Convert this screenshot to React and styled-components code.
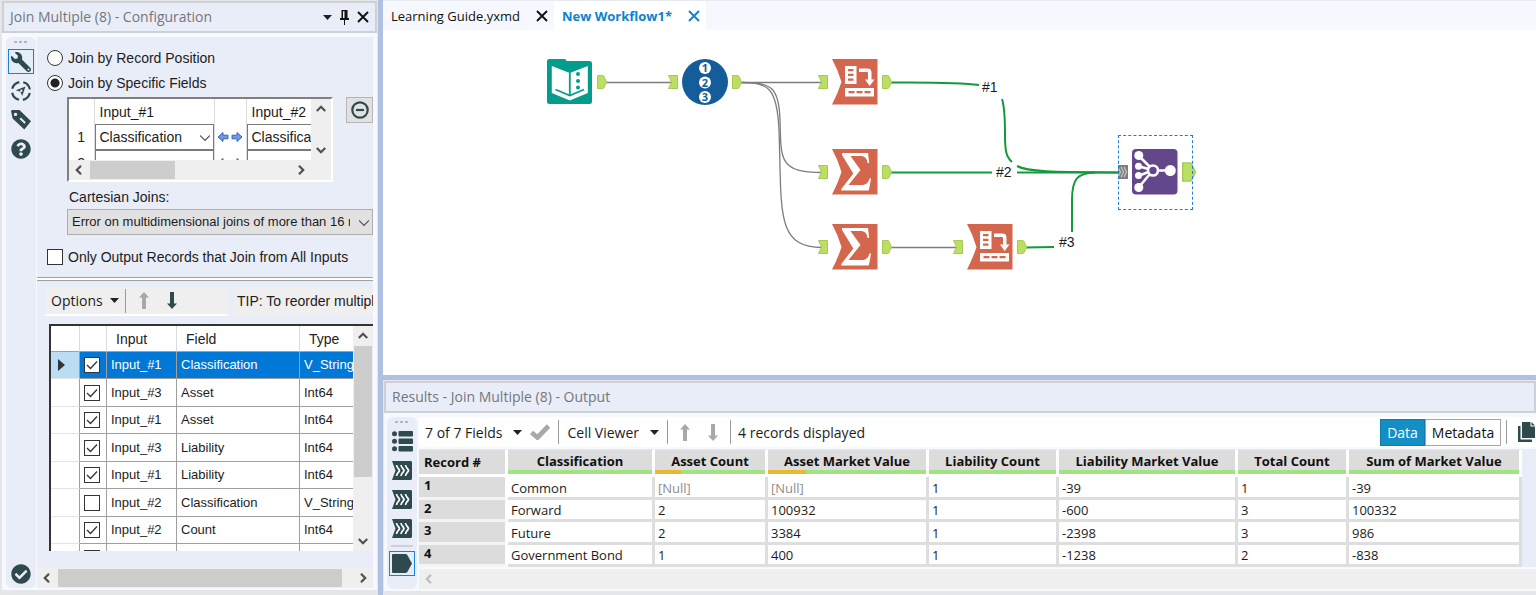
import React from "react";
import styled, { createGlobalStyle, css } from "styled-components";
import { FaWrench, FaQuestionCircle, FaCheckCircle } from "react-icons/fa";

const slate = "#2f4a4c";
const panel = "#e9edf8";
const uiFont = `"Open Sans", "Noto Sans", sans-serif`;
const formFont = `"Liberation Sans", Arial, sans-serif`;

const GlobalStyle = createGlobalStyle`
  * {
    box-sizing: border-box;
  }
  body {
    margin: 0;
    background: #e5e6e9;
    font-family: ${uiFont};
    font-size: 13px;
    color: #1c1c1c;
  }
  button, select, input {
    margin: 0;
    font: inherit;
    color: inherit;
  }
  button {
    display: flex;
    align-items: center;
    justify-content: center;
    padding: 0;
    border: none;
    background: none;
  }
  svg {
    display: block;
    flex: none;
  }
`;

const Page = styled.div`
  display: flex;
  height: 100vh;
  overflow: hidden;
`;

/* shared panel parts */

const TitleBar = styled.header`
  display: flex;
  align-items: center;
  gap: 8px;
  flex: none;
  height: 32px;
  padding: 0 6px;
  border: 2px solid #cfd0d4;
  background: ${panel};
  color: #111;

  h2 {
    flex: 1;
    margin: 0;
    font-size: 14px;
    font-weight: 400;
    line-height: 20px;
    color: #74767d;
    white-space: nowrap;
  }
`;

const PanelBody = styled.div`
  display: flex;
  flex: 1;
  min-height: 0;
  padding: 4px 4px 2px 3px;
  background: #f6f9ff;
`;

const Rail = styled.nav`
  display: flex;
  flex-direction: column;
  align-items: center;
  flex: none;
  width: 30px;
  gap: 4px;
  padding-top: 4px;
  border-radius: 6px;
  background: ${panel};
  color: ${slate};
`;

const Dots = styled.div`
  width: 14px;
  height: 2px;
  margin-bottom: 2px;
  background: repeating-linear-gradient(90deg, #b4b6bc 0 3px, transparent 3px 5px);
`;

const RailButton = styled.button`
  width: 26px;
  height: 25px;
  ${(p) =>
    p.$active &&
    css`
      border: 1px solid #1a80d8;
      background: #e3eefb;
    `}
  ${(p) =>
    p.$last &&
    css`
      margin-top: auto;
      margin-bottom: 2px;
    `}
`;

const RailLine = styled.div`
  width: 22px;
  height: 2px;
  background: #cdd0d6;
`;

/* configuration panel */

const ConfigPanel = styled.aside`
  display: flex;
  flex-direction: column;
  flex: 0 0 378px;
  min-width: 0;
  padding: 1px 1px 5px 2px;

  ${PanelBody} {
    padding-left: 4px;
  }
`;

const ConfigColumn = styled.div`
  display: flex;
  flex-direction: column;
  flex: 1;
  min-width: 0;
  margin-left: 1px;
  background: ${panel};
`;

const Form = styled.div`
  display: flex;
  flex-direction: column;
  flex: 1;
  min-height: 0;
  overflow: hidden;
  padding-top: 8px;
  font-family: ${formFont};
  font-size: 14px;
  line-height: 16px;
`;

const Choice = styled.label`
  display: flex;
  align-items: center;
  gap: 5px;
  height: 25px;
  padding-left: 10px;
  white-space: nowrap;
`;

const Radio = styled.input.attrs({ type: "radio" })`
  appearance: none;
  width: 16px;
  height: 16px;
  border: 1px solid #333;
  border-radius: 50%;
  background: #fff;

  &:checked {
    background: radial-gradient(circle, #222 4px, #fff 5px);
  }
`;

const Check = styled.input.attrs({ type: "checkbox" })`
  appearance: none;
  display: block;
  width: 16px;
  height: 16px;
  border: 1px solid #333;
  background: #fff;

  &:checked {
    background: #fff
      url("data:image/svg+xml,%3Csvg xmlns='http://www.w3.org/2000/svg' viewBox='0 0 14 14'%3E%3Cpath d='M2 7l3.5 3.5L12 3.5' fill='none' stroke='%23333' stroke-width='1.3'/%3E%3C/svg%3E");
  }
`;

const JoinRow = styled.div`
  display: flex;
  align-items: flex-start;
  justify-content: space-between;
  margin-left: 30px;
  padding-top: 2px;
`;

const JoinBox = styled.div`
  display: grid;
  grid-template-columns: 1fr 20px;
  grid-template-rows: 61px 20px;
  width: 266px;
  border: 2px solid;
  border-color: #808080 #fff #fff #808080;
  background: #efefef;
`;

const Clip = styled.div`
  min-width: 0;
  min-height: 0;
  overflow: hidden;
  background: #fff;
`;

const JoinTable = styled.table`
  width: 360px;
  table-layout: fixed;
  border-collapse: collapse;

  th {
    height: 25px;
    padding: 0 5px;
    border-right: 1px solid #dcdcdc;
    font-weight: 400;
    text-align: left;
  }
  td {
    height: 26px;
    padding: 0;
    border-right: 1px solid #dcdcdc;
  }
  td:first-child {
    text-align: center;
  }
`;

const SelectWrap = styled.div`
  position: relative;

  svg {
    position: absolute;
    top: 50%;
    right: 4px;
    margin-top: -4px;
    pointer-events: none;
  }
`;

const Select = styled.select`
  appearance: none;
  display: block;
  width: 100%;
  height: 26px;
  padding: 0 ${(p) => (p.$grey ? 22 : 20)}px 0 4px;
  border: 1px solid ${(p) => (p.$grey ? "#adadad" : "#7a7a7a")};
  border-radius: 0;
  background: ${(p) => (p.$grey ? "#e1e1e1" : "#fff")};
  font-size: ${(p) => (p.$grey ? 13 : 14)}px;
`;

const Arrows = styled.div`
  display: flex;
  justify-content: center;
  gap: 2px;
`;

const IconButton = styled.button`
  width: 27px;
  height: 26px;
  border: 1px solid #b5b5b5;
  background: #e1e1e1;
  color: ${slate};
`;

const Cartesian = styled.div`
  display: flex;
  flex-direction: column;
  gap: 4px;
  margin: 7px 0 9px 30px;

  label {
    padding-left: 2px;
  }
`;

const Splitter = styled.div`
  flex: none;
  height: 4px;
  margin: 8px 0 6px;
  border-top: 1px solid #a0a0a0;
  border-bottom: 1px solid #a0a0a0;
  background: #fff;
`;

const OptionsRow = styled.div`
  display: flex;
  flex: none;
  gap: 5px;
  padding-left: 8px;
  white-space: nowrap;
`;

const Strip = styled.div`
  display: flex;
  align-items: center;
  gap: 6px;
  height: 29px;
  width: ${(p) => (p.$fill ? "auto" : "183px")};
  flex: ${(p) => (p.$fill ? "1" : "none")};
  overflow: hidden;
  padding: 0 0 0 ${(p) => (p.$fill ? 4 : 6)}px;
  border-bottom: 2px solid ${(p) => (p.$fill ? "#efefef" : "#fff")};
  background: #efefef;
`;

const TextButton = styled.button`
  gap: ${(p) => (p.$tight ? 7 : 11)}px;
  font-family: ${uiFont};
  font-size: 14px;
  white-space: nowrap;
`;

const Rule = styled.span`
  width: 1px;
  height: 24px;
  background: #9a9a9a;
`;

const ToolGroup = styled.div`
  display: flex;
  align-items: center;
  gap: ${(p) => p.$gap}px;
  margin-left: ${(p) => (p.$end ? "auto" : `${p.$before || 0}px`)};
`;

const FieldsBox = styled.div`
  display: grid;
  grid-template-columns: 1fr 20px;
  flex: none;
  height: 227px;
  margin: 8px 0 0 12px;
  border-top: 2px solid #333;
  border-left: 2px solid #333;
  background: #efefef;
`;

const FieldsTable = styled.table`
  width: 310px;
  table-layout: fixed;
  border-collapse: separate;
  border-spacing: 0;
  font-size: 13px;

  th {
    height: 26px;
    padding: 0 9px;
    border-right: 1px solid #dcdcdc;
    border-bottom: 1px solid #a0a0a0;
    font-size: 14px;
    font-weight: 400;
    text-align: left;
    color: #222;
  }
  td {
    height: 27px;
    padding: 0 4px;
    border-right: 1px solid #a0a0a0;
    border-bottom: 1px solid #a0a0a0;
    white-space: nowrap;
  }
  tr:nth-child(even) td {
    height: 28px;
  }
  td:first-child {
    padding: 0 7px;
    border-bottom-color: #e4e4e4;
  }
`;

const FieldRow = styled.tr`
  ${(p) =>
    p.$selected &&
    css`
      background: #0078d7;
      color: #fff;

      td:first-child {
        background: #bcdcf4;
      }
    `}
`;

/* scrollbars */

const VBar = styled.div`
  display: flex;
  flex-direction: column;
  align-items: center;
  background: #efefef;
  color: #505050;
`;

const HBar = styled.div`
  display: flex;
  align-items: center;
  flex: none;
  height: 20px;
  background: #efefef;
  color: ${(p) => (p.$idle ? "#bdbdbd" : "#505050")};
`;

const ScrollButton = styled.button`
  flex: none;
  width: 20px;
  height: 20px;
`;

const Track = styled.div`
  display: flex;
  flex-direction: ${(p) => (p.$vertical ? "column" : "row")};
  align-self: stretch;
  flex: 1;
  min-height: 0;
`;

const Thumb = styled.div`
  flex: 0 0 ${(p) => p.$size};
  margin: ${(p) => (p.$vertical ? "0 1px" : "1px")};
  background: #cdcdcd;
`;

/* workspace */

const Workspace = styled.main`
  display: flex;
  flex-direction: column;
  flex: 1;
  min-width: 0;
  border-left: 5px solid #b0c0e2;
`;

const Tabs = styled.div`
  display: flex;
  flex: none;
  height: 30px;
  border-top: 1px solid #e8ecf2;
  background: #f5f9ff;
`;

const Tab = styled.div`
  display: flex;
  align-items: center;
  gap: 16px;
  padding: 0 6px 0 8px;
  background: ${(p) => (p.$active ? "#fff" : "transparent")};
  color: ${(p) => (p.$active ? "#0c82cf" : "#111")};
  font-weight: ${(p) => (p.$active ? 700 : 400)};
  white-space: nowrap;
`;

const Canvas = styled.section`
  position: relative;
  flex: 1;
  min-height: 0;
  overflow: hidden;
  background: #fff;
`;

const Wires = styled.svg`
  position: absolute;
  left: 0;
  top: 0;
`;

const Node = styled.div`
  position: absolute;
  left: ${(p) => p.$x}px;
  top: ${(p) => p.$y}px;
  display: flex;
  align-items: center;
  gap: 4px;
  width: 75px;
  height: 75px;
  padding-bottom: 1px;
  ${(p) => p.$selected && "outline: 1px dashed #1a80d8; outline-offset: -1px;"}
`;

const Slot = styled.span`
  flex: none;
  width: 10px;
`;

const WireLabel = styled.span`
  position: absolute;
  left: ${(p) => p.$x}px;
  top: ${(p) => p.$y}px;
  font-family: ${formFont};
  font-size: 14px;
  line-height: 16px;
`;

/* results */

const Results = styled.section`
  display: flex;
  flex-direction: column;
  flex: none;
  height: 220px;
  padding: 1px 0 4px 1px;
  border-top: 5px solid #b0c0e2;
`;

const ResultsColumn = styled.div`
  display: flex;
  flex-direction: column;
  flex: 1;
  min-width: 0;
  margin: 0 -4px 0 2px;
`;

const Toolbar = styled.div`
  display: flex;
  align-items: center;
  flex: none;
  height: 30px;
  padding-left: 6px;
  background: #fff;
  font-size: 14px;
  white-space: nowrap;
`;

const Switch = styled.button`
  width: ${(p) => (p.$on ? 45 : 76)}px;
  height: 27px;
  border: 1px solid ${(p) => (p.$on ? "#127aa8" : "#a5a5a5")};
  background: ${(p) => (p.$on ? "#148fc6" : "#fff")};
  color: ${(p) => (p.$on ? "#fff" : "#111")};
`;

const TableArea = styled.div`
  margin: 2px 0;
  background: ${panel};
`;

const DataTable = styled.table`
  width: 1103px;
  table-layout: fixed;
  border-collapse: separate;
  border-spacing: 0;
  line-height: 17px;
  background: #fff;

  th {
    padding: 0;
    border-right: 3px solid #fff;
    background: #dcdcdc;
    font-weight: 700;
    color: #111;
  }
  thead th {
    height: 28px;
    border-top: 1px solid #e6e6e6;
    border-bottom: 3px solid #fff;
  }
  thead th:first-child,
  tbody th {
    padding-left: 5px;
    text-align: left;
  }
  tbody th {
    border-bottom: 3px solid #f4f4f4;
    vertical-align: top;
  }
  td {
    padding: 2px 0 0 3px;
    border-right: 3px solid #dedede;
    border-bottom: 3px solid #dedede;
  }
  tbody tr {
    height: 22px;
  }
  tbody tr:nth-child(odd) {
    height: 23px;
  }
`;

const Quality = styled.div`
  height: 4px;
  background: linear-gradient(90deg, #e8b92f ${(p) => p.$nulls}%, #a0e481 ${(p) => p.$nulls}%);
`;

const HeadText = styled.div`
  height: 20px;
  line-height: 22px;
`;

const Null = styled.span`
  color: #8d8d8d;
`;

const Caret = () => (
  <svg width="9" height="5" viewBox="0 0 9 5">
    <path d="M0 0h9L4.500 5z" fill="#222" />
  </svg>
);

const Close = () => (
  <svg width="12" height="12" viewBox="0 0 12 12">
    <path d="M1 1l10 10M11 1l-10 10" stroke="currentColor" strokeWidth="1.900" />
  </svg>
);

const Pin = () => (
  <svg width="9" height="15" viewBox="0 0 9 15">
    <path d="M1.500 0h6v8H9v2H5v5H4v-5H0V8h1.500zM3 1.200V8h1.500V1.200z" fill="#111" fillRule="evenodd" />
  </svg>
);

const turns = { right: 0, down: 90, left: 180, up: 270 };

const Chevron = ({ to = "down", thin }) => (
  <svg width="10" height="10" viewBox="0 0 10 10">
    <path
      d={thin ? "M2.500 0l5 5-5 5" : "M3 .8l4.200 4.200L3 9.200"}
      fill="none"
      stroke={thin ? "#555" : "currentColor"}
      strokeWidth={thin ? 1.2 : 2.2}
      transform={`rotate(${turns[to]} 5 5)`}
    />
  </svg>
);

const VerticalArrow = ({ down, color = "#a8a8a8" }) => (
  <svg width="10" height="17" viewBox="0 0 10 17">
    <path d="M5 0l5 5.500H7V17H3V5.500H0z" fill={color} transform={down ? "rotate(180 5 8.500)" : undefined} />
  </svg>
);

const BlueArrow = ({ right }) => (
  <svg width="12" height="12" viewBox="0 0 12 12">
    <path
      d="M1 6L6 1.500v2.700h5v3.600H6v2.700z"
      fill="#6f99e0"
      stroke="#3566bd"
      transform={right ? "rotate(180 6 6)" : undefined}
    />
  </svg>
);

const CompassIcon = () => (
  <svg width="22" height="22" viewBox="0 0 22 22">
    <circle cx="11" cy="11" r="9" fill="none" stroke={slate} strokeWidth="2.200" strokeDasharray="10.140 4" strokeDashoffset="-2" />
    <path d="M15.500 6.500l-3.300 9.500-1.700-4.300-4.700-1.500z" fill={slate} />
    <circle cx="11.300" cy="10.700" r="1.200" fill={panel} />
  </svg>
);

const TagIcon = () => (
  <svg width="22" height="22" viewBox="0 0 22 22">
    <path
      d="M2 1h7.500L21 12.300 14.300 20.500 2.600 9.500 1 2zM5.500 3.700a1.700 1.700 0 1 0 .01 0zM9.500 10l5 4.700 1.300-1.500-4.900-4.700z"
      fill={slate}
      fillRule="evenodd"
    />
  </svg>
);

const MinusIcon = () => (
  <svg width="18" height="18" viewBox="0 0 18 18" fill="none" stroke={slate} strokeWidth="2.200">
    <circle cx="9" cy="9" r="7.700" />
    <path d="M5 9h8" />
  </svg>
);

const ListIcon = () => (
  <svg width="21" height="21" viewBox="0 0 21 21" fill={slate}>
    {[0, 7.5, 15].map((y) => (
      <g key={y}>
        <circle cx="2.500" cy={y + 2.75} r="2.500" />
        <rect x="6.500" y={y} width="14.500" height="5.500" rx="1" />
      </g>
    ))}
  </svg>
);

const InputIcon = () => (
  <svg width="20" height="19" viewBox="0 0 20 19">
    <path d="M0 0h19l1 1v17l-1 1H0l3.500-9.500z" fill={slate} />
    <path
      d="M4.500 4c.5 3.500 2.500 3 3 5.500-.5 2.500-2.500 2-3 5.500M9 4c.5 3.500 2.500 3 3 5.500-.5 2.500-2.500 2-3 5.500M13.500 4c.5 3.500 2.500 3 3 5.500-.5 2.500-2.500 2-3 5.500"
      fill="none"
      stroke="#fff"
      strokeWidth="1.700"
    />
  </svg>
);

const OutputIcon = () => (
  <svg width="20" height="19" viewBox="0 0 20 19">
    <path d="M1 0h12.500q1 0 1.700.8L20 9.500l-4.800 8.700q-.7.8-1.700.8H1q-1 0-1-1V1q0-1 1-1z" fill={slate} />
  </svg>
);

const TickIcon = () => (
  <svg width="20" height="16" viewBox="0 0 20 16">
    <path d="M1.500 8.500l6 5L18.500 2" fill="none" stroke="#a8a8a8" strokeWidth="4.800" />
  </svg>
);

const CopyIcon = () => (
  <svg width="18" height="20" viewBox="0 0 18 20" fill={slate}>
    <path d="M4 0h8.500v4.500H17V16H4zM13.500 0L17 3.500h-3.500z" />
    <path d="M0 4h2.500v13.500H14V20H0z" />
  </svg>
);

/* tool anchors and tiles */

const AnchorIn = () => (
  <svg width="10" height="14" viewBox="0 0 10 14">
    <path d="M.5.500h9v13h-9l3-6.500z" fill="#bbdf63" stroke="#a6c957" />
  </svg>
);

const AnchorMulti = () => (
  <svg width="10" height="14" viewBox="0 0 10 14">
    <path d="M0 0h10v14H0z" fill="#7f7f7f" />
    <path d="M0 2l2.500 5L0 12M3 2l2.500 5L3 12M6 2l2.500 5L6 12" fill="none" stroke="#e8e8e8" strokeWidth=".9" />
  </svg>
);

const AnchorOut = ({ big }) => (
  <svg width={big ? 14 : 10} height={big ? 20 : 14} viewBox="0 0 10 14">
    <path d="M.5.500h5.300q.6 0 1 .6L9.500 7l-2.700 5.900q-.4.600-1 .600H.5z" fill="#bbdf63" stroke="#a6c957" />
  </svg>
);

const InputTool = () => (
  <svg width="46" height="46" viewBox="0 0 46 46">
    <path d="M2.500 0h15q1.500 0 2 2h23q2.500 0 2.500 2.500v38q0 2.500-2.500 2.500h-40Q0 45 0 42.500v-40Q0 0 2.500 0z" fill="#049d8c" />
    <path d="M4.800 7l18 7 18-7v27l-18 7.500-18-7.500z" fill="#fff" />
    <path d="M22.800 13.500v23M8.500 30.500l14.300 6 14.300-6" fill="none" stroke="#049d8c" strokeWidth="1.800" />
    <g fill="#049d8c">
      <circle cx="31" cy="15" r="2" />
      <circle cx="31" cy="22" r="2" />
      <circle cx="31" cy="28.500" r="2" />
    </g>
  </svg>
);

const RecordIdTool = () => (
  <svg width="46" height="46" viewBox="0 0 46 46">
    <circle cx="23" cy="23" r="23" fill="#155d9a" />
    {["1", "2", "3"].map((n, i) => (
      <g key={n}>
        <circle cx="23" cy={9 + i * 14.5} r="6" fill="#fff" />
        <text x="23" y={13 + i * 14.5} textAnchor="middle" fontSize="11" fontWeight="700" fill="#155d9a">
          {n}
        </text>
      </g>
    ))}
  </svg>
);

const TransformShape = ({ children }) => (
  <svg width="46" height="46" viewBox="0 0 46 46">
    <path d="M0 0h45.500v45.500H0Q6 34 9.500 23 6 11 0 0z" fill="#d3664c" />
    {children}
  </svg>
);

const SummarizeTool = () => (
  <TransformShape>
    <path
      d="M10 4h26l1.200 10h-1.600c-1-5-2.500-7-7.500-7H18.500L28.500 21 16.500 36h12.500c5.500 0 7-2 8.500-6.500h1.600l-2.300 12H9.300v-1.600L21.300 24.500 10 6z"
      fill="#fff"
    />
  </TransformShape>
);

const CrossTabTool = () => (
  <TransformShape>
    <path
      d="M13 7h11.500v18H13zM16 10v2.200h5.500V10zM16 14.700v2.200h5.500v-2.200zM16 19.500v2.200h5.500v-2.200zM13 29h29v8.500H13zM16.500 32v2.200h6V32zM24.500 32v2.200h6V32zM32.500 32v2.200h6V32z"
      fill="#fff"
      fillRule="evenodd"
    />
    <path d="M27 9.500h8.500q4 0 4 4v7h3L37.700 27 33 20.500h3v-6.500q0-1-1-1h-8z" fill="#fff" />
  </TransformShape>
);

const JoinMultipleTool = () => (
  <svg width="46" height="46" viewBox="0 0 46 46">
    <rect width="45.500" height="45.500" rx="4" fill="#64468b" />
    <g stroke="#fff" strokeWidth="2.600" fill="none">
      <circle cx="21" cy="21.500" r="5" />
      <path d="M26 21.500h10M17.500 17.500L7 7M16.500 20L6 17M16.500 23L6 27M17.500 25.500L7 38" />
    </g>
    <g fill="#fff">
      <circle cx="6.800" cy="6.500" r="4.500" />
      <circle cx="6.500" cy="17.300" r="3.500" />
      <circle cx="6.500" cy="26.500" r="3.500" />
      <circle cx="6.800" cy="38.500" r="4.500" />
      <circle cx="38.300" cy="21.500" r="5.500" />
    </g>
  </svg>
);

const fields = [
  ["Input_#1", "Classification", "V_String", true],
  ["Input_#3", "Asset", "Int64", true],
  ["Input_#1", "Asset", "Int64", true],
  ["Input_#3", "Liability", "Int64", true],
  ["Input_#1", "Liability", "Int64", true],
  ["Input_#2", "Classification", "V_String", false],
  ["Input_#2", "Count", "Int64", true],
  ["", "", "", true],
];

const columns = [
  { name: "Classification", width: 147, nulls: 0 },
  { name: "Asset Count", width: 113, nulls: 24 },
  { name: "Asset Market Value", width: 161, nulls: 24 },
  { name: "Liability Count", width: 130, nulls: 0 },
  { name: "Liability Market Value", width: 179, nulls: 0 },
  { name: "Total Count", width: 111, nulls: 0 },
  { name: "Sum of Market Value", width: 173, nulls: 0 },
];

const records = [
  ["Common", null, null, "1", "-39", "1", "-39"],
  ["Forward", "2", "100932", "1", "-600", "3", "100332"],
  ["Future", "2", "3384", "1", "-2398", "3", "986"],
  ["Government Bond", "1", "400", "1", "-1238", "2", "-838"],
];

const tools = [
  { id: "input", x: 150, y: 15, icon: <InputTool />, noInput: true },
  { id: "recordId", x: 285, y: 15, icon: <RecordIdTool /> },
  { id: "crosstab1", x: 435, y: 15, icon: <CrossTabTool /> },
  { id: "summarize1", x: 435, y: 105, icon: <SummarizeTool /> },
  { id: "summarize2", x: 435, y: 180, icon: <SummarizeTool /> },
  { id: "crosstab2", x: 570, y: 180, icon: <CrossTabTool /> },
  { id: "joinMultiple", x: 735, y: 105, icon: <JoinMultipleTool />, selected: true },
];

const greyWires = [
  "M223 52.500H289",
  "M358 52.500H439",
  "M358 52.500C388 52.500 396 56 397 90C398 130 396 142.500 439 142.500",
  "M358 52.500C386 52.500 394 58 396 100C399 180 392 217.500 439 217.500",
  "M508 217.500H574",
];

const greenWires = [
  "M507 52.500C550 52.500 575 52 596 55",
  "M619 69C622 78 622 90 622 105C622 120 623 127 629 132",
  "M634 136C645 142 670 142 738 142.500",
  "M507 142.500H609M634 142.500H738",
  "M643 217.500L671 217",
  "M689 202V170C689 148 695 143 712 142.500",
];

function FieldSelect({ id, label, value, ...rest }) {
  return (
    <SelectWrap>
      <Select id={id} aria-label={label} defaultValue={value} {...rest}>
        <option>{value}</option>
      </Select>
      <Chevron thin />
    </SelectWrap>
  );
}

function Configuration() {
  return (
    <ConfigPanel>
      <TitleBar>
        <h2>Join Multiple (8) - Configuration</h2>
        <Caret />
        <Pin />
        <button aria-label="Close">
          <Close />
        </button>
      </TitleBar>
      <PanelBody>
        <Rail>
          <Dots />
          <RailButton $active aria-label="Configuration">
            <FaWrench size={20} transform="scale(-1 1)" />
          </RailButton>
          <RailButton aria-label="Navigation">
            <CompassIcon />
          </RailButton>
          <RailButton aria-label="Annotation">
            <TagIcon />
          </RailButton>
          <RailButton aria-label="Help">
            <FaQuestionCircle size={20} />
          </RailButton>
          <RailButton $last aria-label="Apply">
            <FaCheckCircle size={20} />
          </RailButton>
        </Rail>
        <ConfigColumn>
          <Form>
            <Choice>
              <Radio name="join" />
              Join by Record Position
            </Choice>
            <Choice>
              <Radio name="join" defaultChecked />
              Join by Specific Fields
            </Choice>
            <JoinRow>
              <JoinBox>
                <Clip>
                  <JoinTable>
                    <colgroup>
                      <col width="25" />
                      <col width="120" />
                      <col width="32" />
                      <col />
                    </colgroup>
                    <thead>
                      <tr>
                        <th />
                        <th>Input_#1</th>
                        <th />
                        <th>Input_#2</th>
                      </tr>
                    </thead>
                    <tbody>
                      {[1, 2].map((n) => (
                        <tr key={n}>
                          <td>{n}</td>
                          <td>
                            <FieldSelect label={`Input 1 field ${n}`} value={n === 1 ? "Classification" : ""} />
                          </td>
                          <td>
                            <Arrows>
                              <BlueArrow />
                              <BlueArrow right />
                            </Arrows>
                          </td>
                          <td>
                            <FieldSelect label={`Input 2 field ${n}`} value={n === 1 ? "Classification" : ""} />
                          </td>
                        </tr>
                      ))}
                    </tbody>
                  </JoinTable>
                </Clip>
                <VBar>
                  <ScrollButton aria-label="Scroll up">
                    <Chevron to="up" />
                  </ScrollButton>
                  <Track $vertical />
                  <ScrollButton aria-label="Scroll down">
                    <Chevron to="down" />
                  </ScrollButton>
                </VBar>
                <HBar>
                  <ScrollButton aria-label="Scroll left">
                    <Chevron to="left" />
                  </ScrollButton>
                  <Track>
                    <Thumb $size="85px" />
                  </Track>
                  <ScrollButton aria-label="Scroll right">
                    <Chevron to="right" />
                  </ScrollButton>
                </HBar>
              </JoinBox>
              <IconButton aria-label="Remove">
                <MinusIcon />
              </IconButton>
            </JoinRow>
            <Cartesian>
              <label htmlFor="cartesian">Cartesian Joins:</label>
              <FieldSelect
                id="cartesian"
                $grey
                value="Error on multidimensional joins of more than 16 records"
              />
            </Cartesian>
            <Choice>
              <Check />
              Only Output Records that Join from All Inputs
            </Choice>
            <Splitter />
            <OptionsRow>
              <Strip>
                <TextButton $tight>
                  Options <Caret />
                </TextButton>
                <Rule />
                <ToolGroup $gap={18} $before={7}>
                  <button aria-label="Move up">
                    <VerticalArrow />
                  </button>
                  <button aria-label="Move down">
                    <VerticalArrow down color={slate} />
                  </button>
                </ToolGroup>
              </Strip>
              <Strip $fill>TIP: To reorder multiple fields</Strip>
            </OptionsRow>
            <FieldsBox>
              <Clip>
                <FieldsTable>
                  <colgroup>
                    <col width="29" />
                    <col width="27" />
                    <col width="70" />
                    <col width="123" />
                    <col />
                  </colgroup>
                  <thead>
                    <tr>
                      <th />
                      <th />
                      <th>Input</th>
                      <th>Field</th>
                      <th>Type</th>
                    </tr>
                  </thead>
                  <tbody>
                    {fields.map(([input, field, type, on], i) => (
                      <FieldRow key={i} $selected={i === 0}>
                        <td>
                          {i === 0 && (
                            <svg width="7" height="12" viewBox="0 0 7 12">
                              <path d="M0 0l7 6-7 6z" fill="#333" />
                            </svg>
                          )}
                        </td>
                        <td>
                          <Check defaultChecked={on} aria-label={`${input} ${field}`} />
                        </td>
                        <td>{input}</td>
                        <td>{field}</td>
                        <td>{type}</td>
                      </FieldRow>
                    ))}
                  </tbody>
                </FieldsTable>
              </Clip>
              <VBar>
                <ScrollButton aria-label="Scroll up">
                  <Chevron to="up" />
                </ScrollButton>
                <Track $vertical>
                  <Thumb $vertical $size="131px" />
                </Track>
                <ScrollButton aria-label="Scroll down">
                  <Chevron to="down" />
                </ScrollButton>
              </VBar>
            </FieldsBox>
          </Form>
          <HBar>
            <ScrollButton aria-label="Scroll left">
              <Chevron to="left" />
            </ScrollButton>
            <Track>
              <Thumb $size="284px" />
            </Track>
            <ScrollButton aria-label="Scroll right">
              <Chevron to="right" />
            </ScrollButton>
          </HBar>
        </ConfigColumn>
      </PanelBody>
    </ConfigPanel>
  );
}

function WorkflowCanvas() {
  return (
    <Canvas>
      <Wires width="820" height="260" fill="none">
        {greyWires.map((d) => (
          <path key={d} d={d} stroke="#7d7d7d" strokeWidth="1.300" />
        ))}
        {greenWires.map((d) => (
          <path key={d} d={d} stroke="#129a3c" strokeWidth="2" />
        ))}
      </Wires>
      {tools.map((t) => (
        <Node key={t.id} $x={t.x} $y={t.y} $selected={t.selected}>
          {t.noInput ? <Slot /> : t.selected ? <AnchorMulti /> : <AnchorIn />}
          {t.icon}
          <AnchorOut big={t.selected} />
        </Node>
      ))}
      <WireLabel $x={599} $y={49}>#1</WireLabel>
      <WireLabel $x={613} $y={134}>#2</WireLabel>
      <WireLabel $x={676} $y={204}>#3</WireLabel>
    </Canvas>
  );
}

function ResultsPanel() {
  return (
    <Results>
      <TitleBar>
        <h2>Results - Join Multiple (8) - Output</h2>
      </TitleBar>
      <PanelBody>
        <Rail>
          <Dots />
          <RailButton aria-label="Messages">
            <ListIcon />
          </RailButton>
          {[1, 2, 3].map((n) => (
            <RailButton key={n} aria-label={`Input ${n}`}>
              <InputIcon />
            </RailButton>
          ))}
          <RailLine />
          <RailButton $active aria-label="Output">
            <OutputIcon />
          </RailButton>
        </Rail>
        <ResultsColumn>
          <Toolbar>
            <ToolGroup $gap={8}>
              <TextButton>
                7 of 7 Fields <Caret />
              </TextButton>
              <button aria-label="Apply">
                <TickIcon />
              </button>
              <Rule />
              <TextButton>
                Cell Viewer <Caret />
              </TextButton>
              <Rule />
            </ToolGroup>
            <ToolGroup $gap={18} $before={12}>
              <button aria-label="Previous">
                <VerticalArrow />
              </button>
              <button aria-label="Next">
                <VerticalArrow down />
              </button>
            </ToolGroup>
            <ToolGroup $gap={7} $before={12}>
              <Rule />
              <span>4 records displayed</span>
            </ToolGroup>
            <ToolGroup $end $gap={0}>
              <Switch $on>Data</Switch>
              <Switch>Metadata</Switch>
            </ToolGroup>
            <ToolGroup $gap={11} $before={5}>
              <Rule />
              <button aria-label="Copy">
                <CopyIcon />
              </button>
            </ToolGroup>
          </Toolbar>
          <TableArea>
            <DataTable>
              <colgroup>
                <col width="89" />
                {columns.map((c) => (
                  <col key={c.name} width={c.width} />
                ))}
              </colgroup>
              <thead>
                <tr>
                  <th>Record #</th>
                  {columns.map((c) => (
                    <th key={c.name}>
                      <HeadText>{c.name}</HeadText>
                      <Quality $nulls={c.nulls} />
                    </th>
                  ))}
                </tr>
              </thead>
              <tbody>
                {records.map((row, i) => (
                  <tr key={i}>
                    <th>{i + 1}</th>
                    {row.map((cell, j) => (
                      <td key={j}>{cell === null ? <Null>[Null]</Null> : cell}</td>
                    ))}
                  </tr>
                ))}
              </tbody>
            </DataTable>
          </TableArea>
          <HBar $idle>
            <ScrollButton aria-label="Scroll left">
              <Chevron to="left" />
            </ScrollButton>
          </HBar>
        </ResultsColumn>
      </PanelBody>
    </Results>
  );
}

function App() {
  return (
    <>
      <GlobalStyle />
      <Page>
        <Configuration />
        <Workspace>
          <Tabs>
            <Tab>
              Learning Guide.yxmd
              <button aria-label="Close Learning Guide">
                <Close />
              </button>
            </Tab>
            <Tab $active>
              New Workflow1*
              <button aria-label="Close New Workflow1">
                <Close />
              </button>
            </Tab>
          </Tabs>
          <WorkflowCanvas />
          <ResultsPanel />
        </Workspace>
      </Page>
    </>
  );
}

export default App;
